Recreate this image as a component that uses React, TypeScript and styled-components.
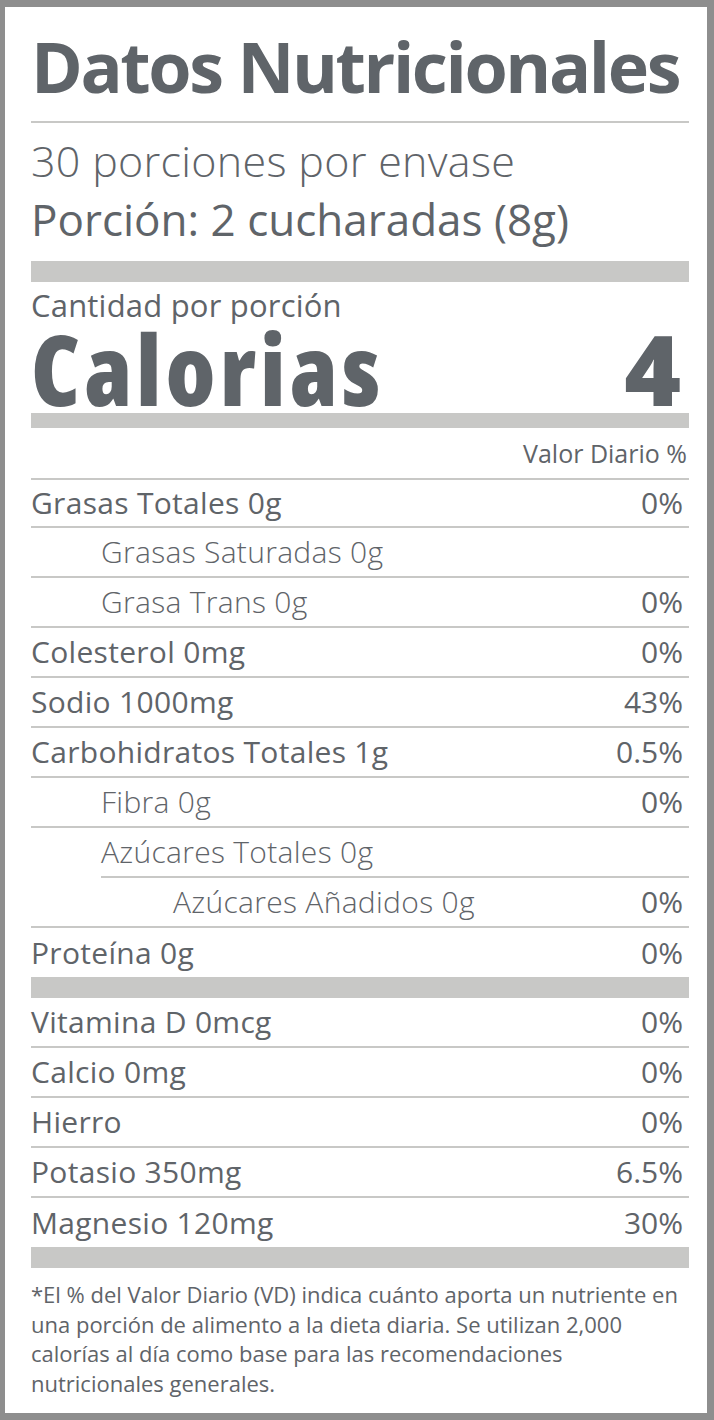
import React from 'react';
import styled, { createGlobalStyle } from 'styled-components';

const GlobalStyle = createGlobalStyle`
  html, body {
    margin: 0;
    padding: 0;
    background: #ffffff;
  }
  body {
    font-family: 'Open Sans', 'Noto Sans', sans-serif;
    color: #5f6469;
  }
`;

const TEXT = '#5f6469';
const RULE = '#c8c8c6';

const Label = styled.div`
  box-sizing: border-box;
  width: 714px;
  height: 1420px;
  border-style: solid;
  border-color: #8e8e8e;
  border-width: 7px 7px 7px 5px;
  padding: 0 18px 0 26px;
  background: #ffffff;
  display: flex;
  flex-direction: column;
  color: ${TEXT};
`;

const Title = styled.h1`
  margin: 19px 0 0;
  font-size: 70px;
  line-height: 80px;
  font-weight: 700;
  letter-spacing: -2.4px;
  white-space: nowrap;
`;

const Rule = styled.div<{ $h: number; $gap?: number }>`
  height: ${(p) => p.$h}px;
  margin-top: ${(p) => p.$gap ?? 0}px;
  background: ${RULE};
  flex-shrink: 0;
`;

const Servings = styled.div`
  margin-top: 12px;
  font-size: 43px;
  line-height: 52px;
  font-weight: 300;
  letter-spacing: 0.3px;
  white-space: nowrap;
`;

const ServingSize = styled.div`
  margin-top: 6px;
  font-size: 44px;
  line-height: 52px;
  font-weight: 400;
  white-space: nowrap;
`;

const Amount = styled.div`
  margin-top: 5px;
  font-size: 31px;
  line-height: 36px;
  font-weight: 400;
  letter-spacing: 0.2px;
  white-space: nowrap;
`;

const CaloriesRow = styled.div`
  display: flex;
  justify-content: space-between;
  align-items: baseline;
  font-size: 97px;
  line-height: 90px;
  font-weight: 800;
`;

const CaloriesName = styled.span`
  font-stretch: 87.5%;
  letter-spacing: 4px;
`;

const CaloriesValue = styled.span`
  padding-right: 8px;
`;

const DailyHeader = styled.div`
  height: 50px;
  line-height: 50px;
  font-size: 25px;
  text-align: right;
  padding-right: 2px;
  border-bottom: 2px solid ${RULE};
`;

const Row = styled.div<{ $h: number; $line: 'full' | 'indent' | 'none' }>`
  position: relative;
  box-sizing: border-box;
  height: ${(p) => p.$h}px;
  display: flex;
  justify-content: space-between;
  font-size: 30px;
  line-height: ${(p) => (p.$line === 'none' ? p.$h : p.$h - 2)}px;
  white-space: nowrap;

  &::after {
    content: '';
    display: ${(p) => (p.$line === 'none' ? 'none' : 'block')};
    position: absolute;
    left: ${(p) => (p.$line === 'indent' ? 70 : 0)}px;
    right: 0;
    bottom: 0;
    height: 2px;
    background: ${RULE};
  }
`;

const Name = styled.span<{ $indent: number; $light: boolean }>`
  padding-left: ${(p) => p.$indent}px;
  font-weight: ${(p) => (p.$light ? 300 : 400)};
  letter-spacing: 0.3px;
`;

const Percent = styled.span`
  padding-right: 6px;
`;

const Footnote = styled.p`
  margin: 12px 0 0;
  font-size: 22px;
  line-height: 29.6px;
  white-space: nowrap;
`;

type Nutrient = {
  name: string;
  dv?: string;
  indent?: number;
  line?: 'full' | 'indent' | 'none';
  h?: number;
};

const macros: Nutrient[] = [
  { name: 'Grasas Totales 0g', dv: '0%', h: 48 },
  { name: 'Grasas Saturadas 0g', indent: 70 },
  { name: 'Grasa Trans 0g', dv: '0%', indent: 70 },
  { name: 'Colesterol 0mg', dv: '0%' },
  { name: 'Sodio 1000mg', dv: '43%' },
  { name: 'Carbohidratos Totales 1g', dv: '0.5%' },
  { name: 'Fibra 0g', dv: '0%', indent: 70 },
  { name: 'Azúcares Totales 0g', indent: 70, line: 'indent' },
  { name: 'Azúcares Añadidos 0g', dv: '0%', indent: 142 },
  { name: 'Proteína 0g', dv: '0%', line: 'none', h: 49 },
];

const minerals: Nutrient[] = [
  { name: 'Vitamina D 0mcg', dv: '0%' },
  { name: 'Calcio 0mg', dv: '0%' },
  { name: 'Hierro', dv: '0%' },
  { name: 'Potasio 350mg', dv: '6.5%' },
  { name: 'Magnesio 120mg', dv: '30%', line: 'none', h: 49 },
];

const NutrientRow = ({ n }: { n: Nutrient }) => (
  <Row $h={n.h ?? 50} $line={n.line ?? 'full'}>
    <Name $indent={n.indent ?? 0} $light={(n.indent ?? 0) > 0}>
      {n.name}
    </Name>
    {n.dv && <Percent>{n.dv}</Percent>}
  </Row>
);

export default function App() {
  return (
    <>
      <GlobalStyle />
      <Label>
        <Title>Datos Nutricionales</Title>
        <Rule $h={2} $gap={15} />
        <Servings>30 porciones por envase</Servings>
        <ServingSize>Porción: 2 cucharadas (8g)</ServingSize>
        <Rule $h={21} $gap={16} />
        <Amount>Cantidad por porción</Amount>
        <CaloriesRow>
          <CaloriesName>Calorias</CaloriesName>
          <CaloriesValue>4</CaloriesValue>
        </CaloriesRow>
        <Rule $h={15} />
        <DailyHeader>Valor Diario %</DailyHeader>
        {macros.map((n) => (
          <NutrientRow key={n.name} n={n} />
        ))}
        <Rule $h={21} />
        {minerals.map((n) => (
          <NutrientRow key={n.name} n={n} />
        ))}
        <Rule $h={21} />
        <Footnote>
          *El % del Valor Diario (VD) indica cuánto aporta un nutriente en
          <br />
          una porción de alimento a la dieta diaria. Se utilizan 2,000
          <br />
          calorías al día como base para las recomendaciones
          <br />
          nutricionales generales.
        </Footnote>
      </Label>
    </>
  );
}
